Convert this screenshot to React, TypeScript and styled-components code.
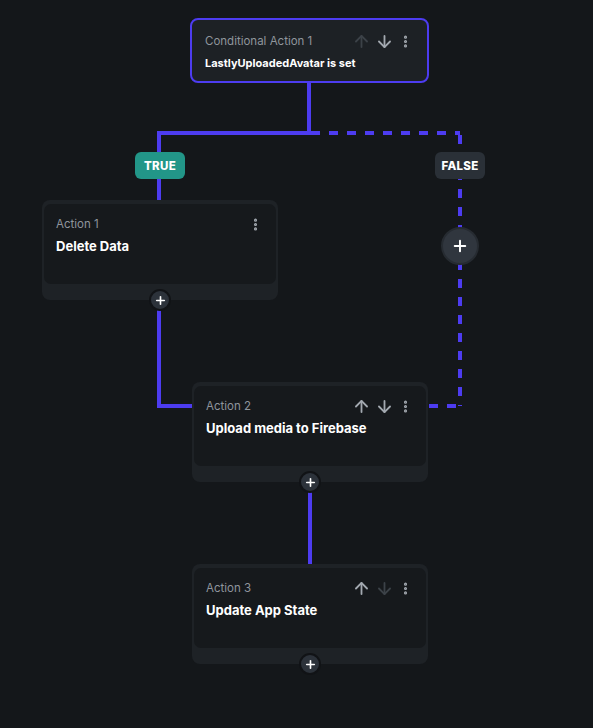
import React from 'react'
import styled, { createGlobalStyle } from 'styled-components'
import { ArrowUp, ArrowDown, EllipsisVertical, Plus } from 'lucide-react'

const PRIMARY = '#4d3cf0'

const GlobalStyle = createGlobalStyle`
  html, body {
    margin: 0;
    padding: 0;
    background: #14171a;
  }
  body {
    font-family: "Inter", "Open Sans", "Liberation Sans", sans-serif;
    -webkit-font-smoothing: antialiased;
  }
`

interface ActionNode {
  id: string
  label: string
  title: string
  x: number
  y: number
  canUp?: boolean
  canDown?: boolean
  showArrows?: boolean
}

const actions: ActionNode[] = [
  { id: 'a1', label: 'Action 1', title: 'Delete Data', x: 42, y: 200, showArrows: false },
  { id: 'a2', label: 'Action 2', title: 'Upload media to Firebase', x: 192, y: 382, showArrows: true, canUp: true, canDown: true },
  { id: 'a3', label: 'Action 3', title: 'Update App State', x: 192, y: 564, showArrows: true, canUp: true, canDown: false },
]

const Up = () => <ArrowUp size={19} strokeWidth={2.3} />
const Down = () => <ArrowDown size={19} strokeWidth={2.3} />
const More = () => <EllipsisVertical size={19} strokeWidth={3} />

export default function App() {
  return (
    <>
      <GlobalStyle />
      <Canvas>
        <Wires />

        <CondCard style={{ left: 190, top: 18 }}>
          <HeaderRow>
            <Label>Conditional Action 1</Label>
            <Tools>
              <ToolIcon $dim><Up /></ToolIcon>
              <ToolIcon><Down /></ToolIcon>
              <ToolIcon $narrow><More /></ToolIcon>
            </Tools>
          </HeaderRow>
          <CondTitle>LastlyUploadedAvatar is set</CondTitle>
        </CondCard>

        <Badge $kind="true" style={{ left: 135, top: 152 }}>TRUE</Badge>
        <Badge $kind="false" style={{ left: 435, top: 152 }}>FALSE</Badge>

        <BigAdd style={{ left: 441, top: 227 }}>
          <Plus size={18} strokeWidth={2.6} />
        </BigAdd>

        {actions.map((a) => (
          <Shell key={a.id} style={{ left: a.x, top: a.y }}>
            <Inner>
              <HeaderRow>
                <Label>{a.label}</Label>
                <Tools>
                  {a.showArrows && (
                    <>
                      <ToolIcon $dim={!a.canUp}><Up /></ToolIcon>
                      <ToolIcon $dim={!a.canDown}><Down /></ToolIcon>
                    </>
                  )}
                  <ToolIcon $narrow><More /></ToolIcon>
                </Tools>
              </HeaderRow>
              <Title>{a.title}</Title>
            </Inner>
            <SmallAdd>
              <Plus size={13} strokeWidth={3} />
            </SmallAdd>
          </Shell>
        ))}
      </Canvas>
    </>
  )
}

// connector lines between nodes
const Wires = () => (
  <WireSvg width={593} height={728} viewBox="0 0 593 728">
    <g stroke={PRIMARY} strokeWidth={4} fill="none">
      <path d="M309 83 V133 H159 V200" />
      <path d="M159 300 V406 H192" />
      <path d="M310 482 V564" />
    </g>
    <g stroke={PRIMARY} strokeWidth={4} fill="none" strokeDasharray="9 9">
      <path d="M311 133 H460" />
      <path d="M460 135 V406" />
      <path d="M428 406 H460" strokeDashoffset="-1" />
    </g>
  </WireSvg>
)

const Canvas = styled.div`
  position: relative;
  width: 593px;
  height: 728px;
  overflow: hidden;
  background: #14171a;
`

const WireSvg = styled.svg`
  position: absolute;
  left: 0;
  top: 0;
`

const CondCard = styled.div`
  position: absolute;
  width: 239px;
  height: 65px;
  box-sizing: border-box;
  border: 2px solid ${PRIMARY};
  border-radius: 8px;
  background: #1d2125;
  padding: 13px 14.5px 0 13px;
`

const Shell = styled.div`
  position: absolute;
  width: 236px;
  height: 100px;
  box-sizing: border-box;
  padding: 4px 2px 0 2px;
  border-radius: 8px;
  background: #1e2226;
`

const Inner = styled.div`
  height: 80px;
  box-sizing: border-box;
  border-radius: 7px;
  background: #16191c;
  padding: 12px 13.5px 0 12px;
`

const HeaderRow = styled.div`
  display: flex;
  align-items: center;
  justify-content: space-between;
  height: 16px;
`

const Label = styled.span`
  font-size: 11.5px;
  color: #8f959c;
`

const Tools = styled.div`
  display: flex;
  align-items: center;
  gap: 4px;
`

const ToolIcon = styled.span<{ $dim?: boolean; $narrow?: boolean }>`
  display: flex;
  width: ${(p) => (p.$narrow ? '15px' : '19px')};
  justify-content: center;
  color: ${(p) => (p.$dim ? '#3c4248' : '#a3a9b0')};
`

const CondTitle = styled.div`
  margin-top: 7px;
  font-size: 11px;
  font-weight: 700;
  color: #ffffff;
`

const Title = styled.div`
  margin-top: 6px;
  font-size: 13px;
  font-weight: 700;
  color: #ffffff;
`

const Badge = styled.div<{ $kind: 'true' | 'false' }>`
  position: absolute;
  width: 50px;
  height: 27px;
  display: flex;
  align-items: center;
  justify-content: center;
  border-radius: 6px;
  font-size: 11.5px;
  font-weight: 800;
  letter-spacing: 0.3px;
  color: #ffffff;
  background: ${(p) => (p.$kind === 'true' ? '#229688' : '#2a3037')};
`

const SmallAdd = styled.div`
  position: absolute;
  left: 50%;
  bottom: -11px;
  transform: translateX(-50%);
  width: 18px;
  height: 18px;
  border-radius: 50%;
  border: 2px solid #111316;
  background: #2c323a;
  color: #ffffff;
  display: flex;
  align-items: center;
  justify-content: center;
`

const BigAdd = styled.div`
  position: absolute;
  width: 34px;
  height: 34px;
  border-radius: 50%;
  border: 2px solid #262b31;
  background: #30363e;
  color: #ffffff;
  display: flex;
  align-items: center;
  justify-content: center;
`
